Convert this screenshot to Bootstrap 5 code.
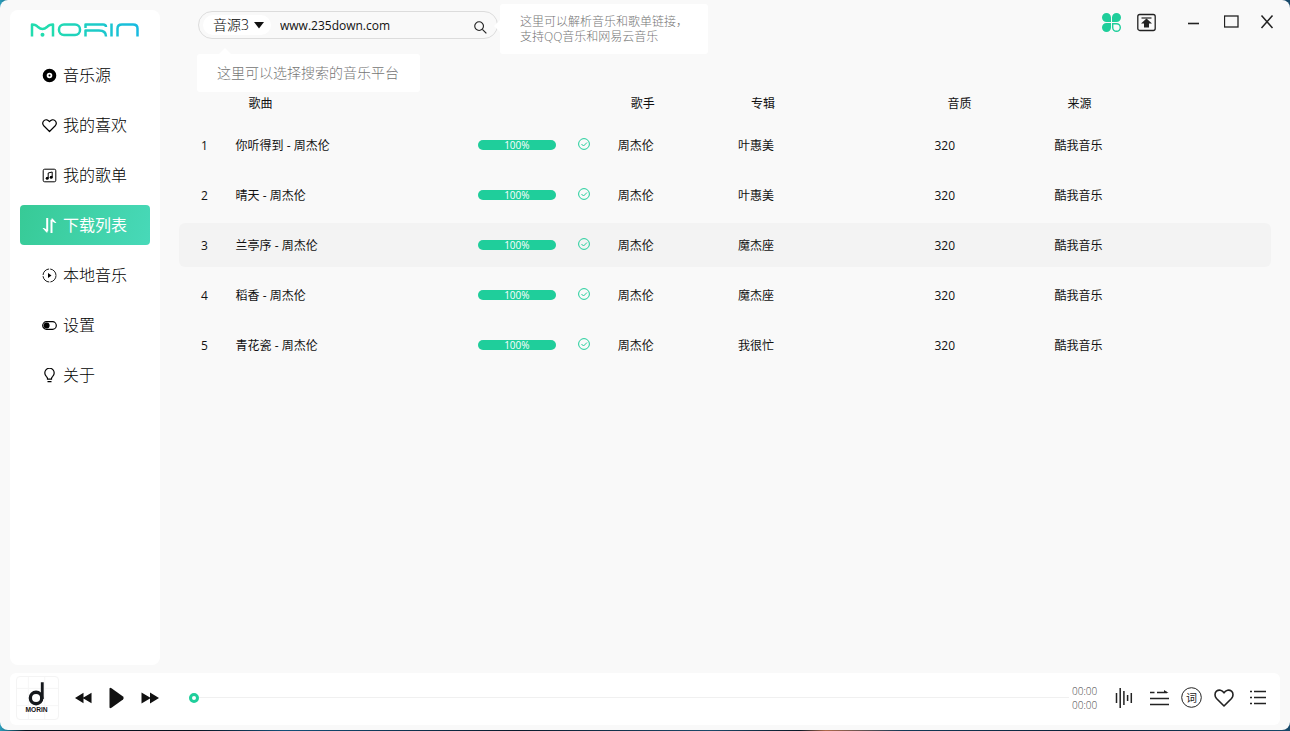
<!DOCTYPE html>
<html lang="zh-CN">
<head>
<meta charset="utf-8">
<meta name="viewport" content="width=device-width, initial-scale=1">
<title>MORIN</title>
<link href="https://cdn.jsdelivr.net/npm/bootstrap@5.3.0/dist/css/bootstrap.min.css" rel="stylesheet">
<style>
:root { --accent: #1fce9b; --ink: #111; --hint: #757575; }
body {
  font-family: "Open Sans", "Noto Sans CJK SC", sans-serif;
  font-size: 12px; line-height: 18px; color: var(--ink);
  background: linear-gradient(90deg, #2a9dbb, #06101c 2%, #08131f 15%, #12507a 22%, #0a1a2b 40%, #1b4a6b 55%, #0b1826 62%, #b0694a 64%, #123a58 70%, #0a2036 85%, #17496a);
}
svg { display: block; fill: none; stroke: currentColor; flex: none; }
.app-window { height: calc(100vh - 1px); background: #f9f9f9; border-radius: 8px; overflow: hidden; }
.side-panel { width: 150px; margin: 10px 0 8px 10px; padding: 12px 10px; border-radius: 8px; }
.side-nav { gap: 10px; margin-top: 16px; }
.side-nav .nav-link {
  height: 40px; padding: 0 0 0 22px; gap: 6px; border-radius: 4px;
  font-size: 16px; line-height: 24px; font-weight: 300; color: #000; white-space: nowrap;
}
.side-nav .nav-link.active { color: #fff; font-weight: 400; background: linear-gradient(110deg, #37ca96, #48d9b9); }
.top-bar { height: 83px; padding: 11px 16px 0 38px; }
.search-pill { width: 300px; height: 28px; padding: 0 10px 0 4px; border: 1px solid #dcdcdc; border-radius: 14px; }
.source-pick {
  width: 68px; height: 20px; padding: 0 0 0 10px; border: 0; border-radius: 10px; appearance: none;
  background: #fff; font-size: 14px; line-height: 20px; font-weight: 300; color: #000;
}
.source-caret { right: 7px; top: 6px; pointer-events: none; }
.search-text { min-width: 0; padding: 2px 9px 0; border: 0; outline: 0; background: transparent; font-size: 12px; line-height: 20px; color: var(--ink); }
.plain-btn { padding: 0; border: 0; background: none; color: #222; }
.hint-box { background: #fff; border-radius: 3px; color: var(--hint); font-weight: 300; white-space: nowrap; z-index: 2; }
.hint-box::before { content: ""; position: absolute; border: 6px solid transparent; }
.hint-source { top: 43px; left: -1px; padding: 9px 20px; width: 223px; font-size: 14px; line-height: 20px; }
.hint-source::before { left: 22px; top: -12px; border-bottom-color: #fff; }
.hint-link { top: -7px; left: 302px; width: 208px; padding: 10px 20px; font-size: 12px; line-height: 15px; }
.hint-link::before { left: -12px; top: 16px; border-right-color: #fff; }
.song-area { padding: 0 19px; }
.song-table { table-layout: fixed; border-collapse: separate; border-spacing: 0 6px; }
.song-table th { height: 28px; padding: 2px 0 0 15px; font-weight: 400; }
.song-table td { height: 44px; padding: 2px 0 0 2px; vertical-align: middle; white-space: nowrap; }
.song-table td:first-child { padding-left: 22px; border-radius: 6px 0 0 6px; }
.song-table td:last-child { border-radius: 0 6px 6px 0; }
.song-table td.done-cell { padding: 0 0 2px 6px; color: var(--accent); }
.song-table td.bar-cell { padding: 0 0 0 4px; }
.song-table tr.current td { background: #f3f3f3; }
.dl-bar { width: 78px; height: 10px; border-radius: 5px; font-size: 10px; background: #e8e8e8; overflow: visible; }
.dl-bar .progress-bar { background: var(--accent); line-height: 14px; border-radius: 5px; overflow: visible; }
.player { height: 52px; margin: 0 10px 5px; padding: 0 13px 3px 6px; border-radius: 6px; }
.cover { border: 1px solid #f4f4f4; border-radius: 4px; }
.seek { appearance: none; height: 10px; margin: 0 3px 0 30px; background: linear-gradient(#f0f0f0, #f0f0f0) center / 100% 1px no-repeat; min-width: 0; }
.seek::-webkit-slider-thumb { appearance: none; width: 10px; height: 10px; border: 3px solid var(--accent); border-radius: 50%; background: #fff; }
.seek::-moz-range-thumb { width: 4px; height: 4px; border: 3px solid var(--accent); border-radius: 50%; background: #fff; }
.times { width: 43px; font-size: 10px; line-height: 14px; font-weight: 300; color: #444; }
.svg-text { stroke: none; fill: currentColor; }
</style>
</head>
<body>
<div class="app-window d-flex flex-column">
  <div class="d-flex flex-grow-1">
    <aside class="side-panel bg-white flex-shrink-0">
      <a href="#" class="d-flex justify-content-center" aria-label="MORIN">
        <svg width="110" height="17" viewBox="0 0 110 17" stroke-width="2.500" stroke-linejoin="round">
          <defs><linearGradient id="brand" gradientUnits="userSpaceOnUse" x1="0" y1="0" x2="110" y2="0"><stop offset=".2" stop-color="#22dcaf"/><stop offset="1" stop-color="#18b9e2"/></linearGradient></defs>
          <g stroke="url(#brand)">
            <path d="M2 14.500V2.500Q6 2.500 8 5Q12.500 9 17 5Q19 2.500 23 2.500V14.500"/>
            <rect x="29" y="2.500" width="21" height="10.500" rx="5"/>
            <path d="M55.500 14.500V8.500H69Q76 8.500 76 14.500M55.500 6V2.500H73Q76 2.500 76 5"/>
            <path d="M81.500 1.500V14.500M87.500 14.500V6.500Q87.500 2.500 92 2.500H103Q107.500 2.500 107.500 6.500V14.500"/>
          </g>
          <circle cx="12.500" cy="12.800" r="2" fill="#22dcaf" stroke="none"/>
        </svg>
      </a>
      <nav class="side-nav nav flex-column">
        <a class="nav-link d-flex align-items-center" href="#"><svg width="15" height="15" viewBox="0 0 15 15"><circle cx="7.500" cy="7.500" r="4.800" stroke-width="4"/><circle cx="7.500" cy="7.500" r="1" fill="currentColor" stroke="none"/></svg>音乐源</a>
        <a class="nav-link d-flex align-items-center" href="#"><svg width="15" height="15" viewBox="0 0 15 15" stroke-width="1.200"><path d="M7.500 13.500L2 8C.5 6.300.5 4 2 2.600C3.700 1.200 6 1.600 7.500 3.700C9 1.600 11.300 1.200 13 2.600C14.500 4 14.500 6.300 13 8Z" stroke-linejoin="round"/></svg>我的喜欢</a>
        <a class="nav-link d-flex align-items-center" href="#"><svg width="15" height="15" viewBox="0 0 15 15"><rect x="1.200" y="1.200" width="12.600" height="12.600" rx="1.500"/><path d="M6.200 10V5L10.200 4V9"/><g fill="currentColor" stroke="none"><circle cx="5.200" cy="10.200" r="1.500"/><circle cx="9.200" cy="9.200" r="1.500"/></g></svg>我的歌单</a>
        <a class="nav-link active d-flex align-items-center" href="#" aria-current="page"><svg width="15" height="15" viewBox="0 0 15 15" stroke-width="2"><path d="M5.200 0V13.200M9.500 15V1.800" /><path d="M.5 10H2L5.500 12V14.500H4.500ZM14.500 5H13L9.500 3V.5H10.500Z" fill="currentColor" stroke="none"/></svg>下载列表</a>
        <a class="nav-link d-flex align-items-center" href="#"><svg width="15" height="15" viewBox="0 0 15 15"><circle cx="7.500" cy="7.500" r="6.500" stroke-width=".9" stroke-dasharray="9 1.200"/><path d="M6 5L9.500 7.500L6 10Z" fill="currentColor" stroke="none"/></svg>本地音乐</a>
        <a class="nav-link d-flex align-items-center" href="#"><svg width="15" height="15" viewBox="0 0 15 15"><rect x=".7" y="3.700" width="13.600" height="7.600" rx="3.800" stroke-width="1.200"/><circle cx="4.600" cy="7.500" r="3" fill="currentColor" stroke="none"/></svg>设置</a>
        <a class="nav-link d-flex align-items-center" href="#"><svg width="15" height="15" viewBox="0 0 15 15" stroke-width="1.200"><path d="M5.500 11.200V10.500Q5.500 9.300 4.300 8.400A4.700 4.700 0 1 1 10.700 8.400Q9.500 9.300 9.500 10.500V11.200ZM5.500 13.700H9.500"/></svg>关于</a>
      </nav>
    </aside>
    <main class="flex-grow-1">
      <header class="top-bar d-flex align-items-start justify-content-between">
        <div class="position-relative">
          <form class="search-pill d-flex align-items-center">
            <div class="position-relative">
              <select class="source-pick d-block" aria-label="音源"><option>音源3</option></select>
              <svg class="source-caret position-absolute" width="10" height="8" viewBox="0 0 10 8"><path d="M0 1H10L5 7.500Z" fill="currentColor" stroke="none"/></svg>
            </div>
            <input class="search-text flex-grow-1" type="text" value="www.235down.com" aria-label="搜索">
            <button class="plain-btn pt-1" type="button" aria-label="搜索"><svg width="13" height="13" viewBox="0 0 14 14" stroke-width="1.200"><circle cx="5.500" cy="5.500" r="4.700"/><path d="M9 9L13.300 13.300"/></svg></button>
          </form>
          <div class="hint-box hint-source position-absolute">这里可以选择搜索的音乐平台</div>
          <div class="hint-box hint-link position-absolute">这里可以解析音乐和歌单链接，<br>支持QQ音乐和网易云音乐</div>
        </div>
        <div class="d-flex align-items-center">
          <button class="plain-btn me-3" aria-label="皮肤"><svg width="19" height="22" viewBox="0 0 19 22"><g fill="#1fce9b" stroke="none"><path d="M9 11H4.500A4.500 4.500 0 1 1 9 6.500ZM10 11V6.500A4.500 4.500 0 1 1 14.500 11ZM9 12V16.500A4.500 4.500 0 1 1 4.500 12Z"/></g><path d="M10.700 12.700H14.500A3.800 3.800 0 1 1 10.700 16.500Z" stroke="#1fce9b" stroke-width="1.400"/></svg></button>
          <button class="plain-btn" aria-label="置顶"><svg width="19" height="22" viewBox="0 0 19 22" stroke-width="1.300"><rect x=".8" y="3.500" width="17.400" height="16" rx="2"/><path d="M4.500 7H14.500" stroke-width="1.200"/><path d="M9.500 7.500L15 12.500H12V16.500H7V12.500H4Z" fill="currentColor" stroke="none"/></svg></button>
          <div class="d-flex align-items-center ps-4 ms-1">
            <button class="plain-btn px-1" aria-label="最小化"><svg width="12" height="22" viewBox="0 0 12 22" stroke-width="1.600"><path d="M0 12.500H11"/></svg></button>
            <button class="plain-btn ms-3 px-1" aria-label="最大化"><svg width="16" height="22" viewBox="0 0 16 22" stroke-width="1.300"><rect x=".5" y="5" width="13.500" height="11"/></svg></button>
            <button class="plain-btn ms-3" aria-label="关闭"><svg width="14" height="22" viewBox="0 0 14 22" stroke-width="1.500"><path d="M1.500 4.500L12.500 17M12.500 4.500L1.500 17"/></svg></button>
          </div>
        </div>
      </header>
      <section class="song-area">
        <table class="song-table w-100">
          <colgroup><col style="width:5%"><col style="width:22%"><col style="width:9%"><col style="width:4%"><col style="width:11%"><col style="width:18%"><col style="width:11%"><col style="width:20%"></colgroup>
          <thead><tr><th></th><th scope="col">歌曲</th><th></th><th></th><th scope="col">歌手</th><th scope="col">专辑</th><th scope="col">音质</th><th scope="col">来源</th></tr></thead>
          <tbody id="songs"></tbody>
        </table>
      </section>
    </main>
  </div>
  <footer class="player bg-white d-flex align-items-center">
    <svg class="cover" width="43" height="44" viewBox="0 0 43 44">
      <path d="M12 0V44M29 0V44M0 12H43M0 30H43" stroke="#f6f6f6"/>
      <circle cx="20" cy="22" r="6" stroke="#15181c" stroke-width="3.500"/><path d="M26.500 5.500V23" stroke="#15181c" stroke-width="3"/>
      <text class="svg-text" x="20.500" y="37" text-anchor="middle" font-family="Liberation Sans" font-weight="700" font-size="7">MORIN</text>
    </svg>
    <button class="plain-btn ms-3" aria-label="上一首"><svg width="17" height="12" viewBox="0 0 18 12"><path d="M0 6L9 .5V5.500L17.500.5V11.500L9 6.500V11.500Z" fill="#111" stroke="none"/></svg></button>
    <button class="plain-btn ms-3" aria-label="播放"><svg width="17" height="22" viewBox="-1 0 17 22"><path d="M.5 2Q.5 0 2.500 1.200L14 9.500Q15.500 11 14 12.500L2.500 20.800Q.5 22 .5 20Z" fill="#111" stroke="none"/></svg></button>
    <button class="plain-btn ms-3" aria-label="下一首"><svg width="18" height="12" viewBox="0 0 18 12"><path d="M.5.5L9 5.500V.5L18 6L9 11.500V6.500L.5 11.500Z" fill="#111" stroke="none"/></svg></button>
    <input class="seek flex-grow-1" type="range" min="0" max="100" value="0" aria-label="播放进度">
    <div class="times">00:00<br>00:00</div>
    <div class="d-flex align-items-center">
      <button class="plain-btn" aria-label="音效"><svg width="18" height="22" viewBox="0 0 18 22" stroke-width="1.500"><path d="M1.500 6V16M5.200 1V21M8.900 4V18M12.600 8V14M16.300 6V16"/></svg></button>
      <button class="plain-btn ms-3" aria-label="播放模式"><svg width="20" height="20" viewBox="0 0 20 20" stroke-width="1.300"><path d="M1 4.500H5.500M8 4.500H18M1 10.500H20M1 16.500H20"/><path d="M15 2L19.500 5H15Z" fill="currentColor" stroke="none"/></svg></button>
      <button class="plain-btn mx-2 px-1" aria-label="歌词"><svg width="21" height="21" viewBox="0 0 21 21"><circle cx="10.500" cy="10.500" r="9.800"/><text class="svg-text" x="10.500" y="14.500" text-anchor="middle" font-size="11">词</text></svg></button>
      <button class="plain-btn" aria-label="喜欢"><svg width="20" height="20" viewBox="0 0 20 20" stroke-width="1.600" stroke-linejoin="round"><path d="M10 18L2.500 10.500C.5 8.300.5 5 2.500 3.200C5 1.200 8 2 10 4.800C12 2 15 1.200 17.500 3.200C19.500 5 19.500 8.300 17.500 10.500Z"/></svg></button>
      <button class="plain-btn ms-3" aria-label="播放列表"><svg width="17" height="18" viewBox="0 0 17 18" stroke-width="1.400"><path d="M0 2.500H2M4 2.500H16M0 8.500H2M4 8.500H16M0 14.500H2M4 14.500H16"/></svg></button>
    </div>
  </footer>
</div>
<script src="https://cdn.jsdelivr.net/npm/bootstrap@5.3.0/dist/js/bootstrap.bundle.min.js"></script>
<script>
const songs = [
  ['你听得到', '叶惠美'], ['晴天', '叶惠美'], ['兰亭序', '魔杰座'], ['稻香', '魔杰座'], ['青花瓷', '我很忙']
];
document.getElementById('songs').innerHTML = songs.map(([title, album], i) => `
  <tr${i === 2 ? ' class="current"' : ''}>
    <td>${i + 1}</td><td>${title} - 周杰伦</td>
    <td class="bar-cell"><div class="progress dl-bar" role="progressbar" aria-label="下载进度" aria-valuenow="100" aria-valuemin="0" aria-valuemax="100"><div class="progress-bar" style="width:100%">100%</div></div></td>
    <td class="done-cell"><svg width="12" height="12" viewBox="0 0 12 12"><circle cx="6" cy="6" r="5.400"/><path d="M3.500 6L5.500 8L9 4.500"/></svg></td>
    <td>周杰伦</td><td>${album}</td><td>320</td><td>酷我音乐</td>
  </tr>`).join('');
</script>
</body>
</html>
